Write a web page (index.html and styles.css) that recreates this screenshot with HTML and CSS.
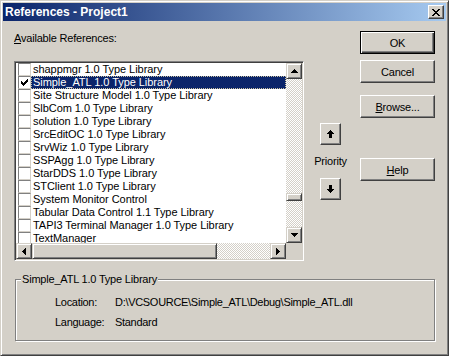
FILE: index.html
```html
<!DOCTYPE html>
<html lang="en">
<head>
    <meta charset="UTF-8">
    <title>References - Project1</title>
    <link rel="stylesheet" href="styles.css">
</head>
<body>
    <div class="window">
        <div class="titlebar">
            <span class="title">References - Project1</span>
            <span class="close-btn">
                <svg width="8" height="7" viewBox="0 0 8 7" shape-rendering="crispEdges"><path d="M0 0h2v1h1v1h2V1h1V0h2v1H7v1H6v1H5v1h1v1h1v1h1v1H6V6H5V5H3v1H2v1H0V6h1V5h1V4h1V3H2V2H1V1H0z" fill="#000"/></svg>
            </span>
        </div>
        <div class="content">
            <div class="main">
                <div class="refs">
                    <div class="label"><u>A</u>vailable References:</div>
                    <div class="listbox">
                        <div class="list-area">
                            <ul class="items">
                                <li class="item"><span class="check"></span><span class="name">shappmgr 1.0 Type Library</span></li>
                                <li class="item"><span class="check"><svg width="7" height="7" viewBox="0 0 7 7" shape-rendering="crispEdges"><path d="M6 0h1v3H6v1H5v1H4v1H3v1H2V6H1V5H0V2h1v1h1v1h1V3h1V2h1V1h1z" fill="#000"/></svg></span><span class="name selected">Simple_ATL 1.0 Type Library</span></li>
                                <li class="item"><span class="check"></span><span class="name">Site Structure Model 1.0 Type Library</span></li>
                                <li class="item"><span class="check"></span><span class="name">SlbCom 1.0 Type Library</span></li>
                                <li class="item"><span class="check"></span><span class="name">solution 1.0 Type Library</span></li>
                                <li class="item"><span class="check"></span><span class="name">SrcEditOC 1.0 Type Library</span></li>
                                <li class="item"><span class="check"></span><span class="name">SrvWiz 1.0 Type Library</span></li>
                                <li class="item"><span class="check"></span><span class="name">SSPAgg 1.0 Type Library</span></li>
                                <li class="item"><span class="check"></span><span class="name">StarDDS 1.0 Type Library</span></li>
                                <li class="item"><span class="check"></span><span class="name">STClient 1.0 Type Library</span></li>
                                <li class="item"><span class="check"></span><span class="name">System Monitor Control</span></li>
                                <li class="item"><span class="check"></span><span class="name">Tabular Data Control 1.1 Type Library</span></li>
                                <li class="item"><span class="check"></span><span class="name">TAPI3 Terminal Manager 1.0 Type Library</span></li>
                                <li class="item"><span class="check"></span><span class="name">TextManager</span></li>
                            </ul>
                            <div class="vscroll">
                                <div class="sb-btn"><svg width="7" height="4" viewBox="0 0 7 4" shape-rendering="crispEdges"><path d="M3 0h1v1h1v1h1v1h1v1H0V3h1V2h1V1h1z" fill="#000"/></svg></div>
                                <div class="track vtrack-top"></div>
                                <div class="thumb vthumb"></div>
                                <div class="track vtrack-bottom"></div>
                                <div class="sb-btn"><svg width="7" height="4" viewBox="0 0 7 4" shape-rendering="crispEdges"><path d="M0 0h7v1H6v1H5v1H4v1H3V3H2V2H1V1H0z" fill="#000"/></svg></div>
                            </div>
                        </div>
                        <div class="hscroll">
                            <div class="sb-btn"><svg width="4" height="7" viewBox="0 0 4 7" shape-rendering="crispEdges"><path d="M3 0h1v7H3V6H2V5H1V4H0V3h1V2h1V1h1z" fill="#000"/></svg></div>
                            <div class="thumb hthumb"></div>
                            <div class="track htrack"></div>
                            <div class="sb-btn"><svg width="4" height="7" viewBox="0 0 4 7" shape-rendering="crispEdges"><path d="M0 0h1v1h1v1h1v1h1v1H3v1H2v1H1v1H0z" fill="#000"/></svg></div>
                            <div class="corner"></div>
                        </div>
                    </div>
                </div>
                <div class="priority">
                    <div class="btn arrow-btn up-btn"><svg width="7" height="8" viewBox="0 0 7 8" shape-rendering="crispEdges"><path d="M3 0h1v1h1v1h1v1h1v1H5v4H2V4H0V3h1V2h1V1h1z" fill="#000"/></svg></div>
                    <div class="priority-label">Priority</div>
                    <div class="btn arrow-btn"><svg width="7" height="8" viewBox="0 0 7 8" shape-rendering="crispEdges"><path d="M2 0h3v4h2v1H6v1H5v1H4v1H3V7H2V6H1V5H0V4h2z" fill="#000"/></svg></div>
                </div>
                <div class="buttons">
                    <div class="btn btn-default">OK</div>
                    <div class="btn btn-cancel">Cancel</div>
                    <div class="btn btn-browse"><u>B</u>rowse...</div>
                    <div class="btn btn-help"><u>H</u>elp</div>
                </div>
            </div>
            <div class="group">
                <span class="group-title">Simple_ATL 1.0 Type Library</span>
                <div class="info">
                    <span>Location:</span><span>D:\VCSOURCE\Simple_ATL\Debug\Simple_ATL.dll</span>
                    <span>Language:</span><span>Standard</span>
                </div>
            </div>
        </div>
    </div>
</body>
</html>
```

FILE: styles.css
```css
* {
    margin: 0;
    padding: 0;
    box-sizing: border-box;
}

body {
    background: #d4d0c8;
    font-family: "Liberation Sans", Arial, sans-serif;
    font-size: 11px;
    letter-spacing: -0.2px;
    color: #000;
}

.window {
    width: 449px;
    height: 356px;
    background: #d4d0c8;
    border: 1px solid;
    border-color: #d4d0c8 #404040 #404040 #d4d0c8;
    box-shadow: inset 1px 1px #fff, inset -1px -1px #808080;
    padding: 2px;
    display: flex;
    flex-direction: column;
}

.titlebar {
    height: 18px;
    display: flex;
    align-items: center;
    padding: 0 2px 0 2px;
    background: linear-gradient(to right, #0a246a, #a6caf0);
    color: #fff;
    font-weight: bold;
    font-size: 12px;
    letter-spacing: 0;
}

.title {
    flex: 1;
}

.close-btn {
    width: 16px;
    height: 14px;
    display: flex;
    align-items: center;
    justify-content: center;
    background: #d4d0c8;
    border: 1px solid;
    border-color: #fff #404040 #404040 #fff;
    box-shadow: inset -1px -1px #808080;
}

.content {
    flex: 1;
    display: flex;
    flex-direction: column;
}

.main {
    display: flex;
}

.refs {
    width: 290px;
    margin-left: 11px;
}

.label {
    margin-top: 11px;
    height: 13px;
    line-height: 13px;
}

.listbox {
    margin-top: 16px;
    width: 290px;
    height: 200px;
    border: 1px solid;
    border-color: #808080 #fff #fff #808080;
    box-shadow: inset 1px 1px #404040, inset -1px -1px #d4d0c8;
    padding: 1px;
    display: flex;
    flex-direction: column;
}

.list-area {
    display: flex;
    height: 180px;
}

.items {
    list-style: none;
    width: 270px;
    height: 180px;
    overflow: hidden;
    background: #fff;
    letter-spacing: -0.05px;
}

.item {
    display: flex;
    align-items: center;
    height: 13px;
    white-space: nowrap;
}

.check {
    width: 13px;
    height: 13px;
    flex: none;
    margin-left: 2px;
    display: flex;
    align-items: center;
    justify-content: center;
    background: #fff;
    border: 1px solid;
    border-color: #808080 #d4d0c8 #d4d0c8 #808080;
}

.name {
    flex: 1;
    height: 13px;
    line-height: 13px;
    padding-left: 2px;
    overflow: hidden;
}

.name.selected {
    background: #0a246a;
    color: #fff;
    outline: 1px dotted #c8c0a0;
    outline-offset: -1px;
}

.vscroll {
    width: 16px;
    display: flex;
    flex-direction: column;
}

.sb-btn {
    width: 16px;
    height: 16px;
    flex: none;
    display: flex;
    align-items: center;
    justify-content: center;
    background: #d4d0c8;
    border: 1px solid;
    border-color: #d4d0c8 #404040 #404040 #d4d0c8;
    box-shadow: inset 1px 1px #fff, inset -1px -1px #808080;
}

.track {
    background-image: conic-gradient(#fff 25%, #d4d0c8 0 50%, #fff 0 75%, #d4d0c8 0);
    background-size: 2px 2px;
}

.thumb {
    background: #d4d0c8;
    border: 1px solid;
    border-color: #d4d0c8 #404040 #404040 #d4d0c8;
    box-shadow: inset 1px 1px #fff, inset -1px -1px #808080;
}

.vtrack-top {
    height: 114px;
}

.vthumb {
    height: 8px;
}

.vtrack-bottom {
    flex: 1;
}

.hscroll {
    display: flex;
    height: 16px;
}

.hthumb {
    width: 185px;
}

.htrack {
    flex: 1;
}

.corner {
    width: 16px;
    background: #d4d0c8;
}

.btn {
    display: flex;
    align-items: center;
    justify-content: center;
    background: #d4d0c8;
    border: 1px solid;
    border-color: #fff #404040 #404040 #fff;
    box-shadow: inset -1px -1px #808080;
}

.priority {
    flex: 1;
    display: flex;
    flex-direction: column;
    align-items: center;
    padding-right: 3px;
}

.arrow-btn {
    width: 21px;
    height: 22px;
}

.up-btn {
    margin-top: 102px;
}

.priority-label {
    margin: 10px 0;
    line-height: 13px;
}

.buttons {
    width: 75px;
    margin-right: 11px;
    padding-top: 10px;
    display: flex;
    flex-direction: column;
}

.buttons .btn {
    height: 23px;
}

.btn-default {
    border-color: #000;
    box-shadow: inset 1px 1px #fff, inset -1px -1px #404040, inset -2px -2px #808080;
}

.btn-cancel {
    margin-top: 6px;
}

.btn-browse {
    margin-top: 12px;
}

.btn-help {
    margin-top: 40px;
}

.group {
    position: relative;
    margin: 18px 11px 0 12px;
    border: 1px solid #808080;
    box-shadow: 1px 1px #fff, inset 1px 1px #fff;
    padding: 16px 0 11px 39px;
}

.group-title {
    position: absolute;
    top: -7px;
    left: 5px;
    padding: 0 1px;
    line-height: 13px;
    background: #d4d0c8;
}

.info {
    display: grid;
    grid-template-columns: 60px auto;
    row-gap: 7px;
    line-height: 13px;
    letter-spacing: -0.3px;
}
```
